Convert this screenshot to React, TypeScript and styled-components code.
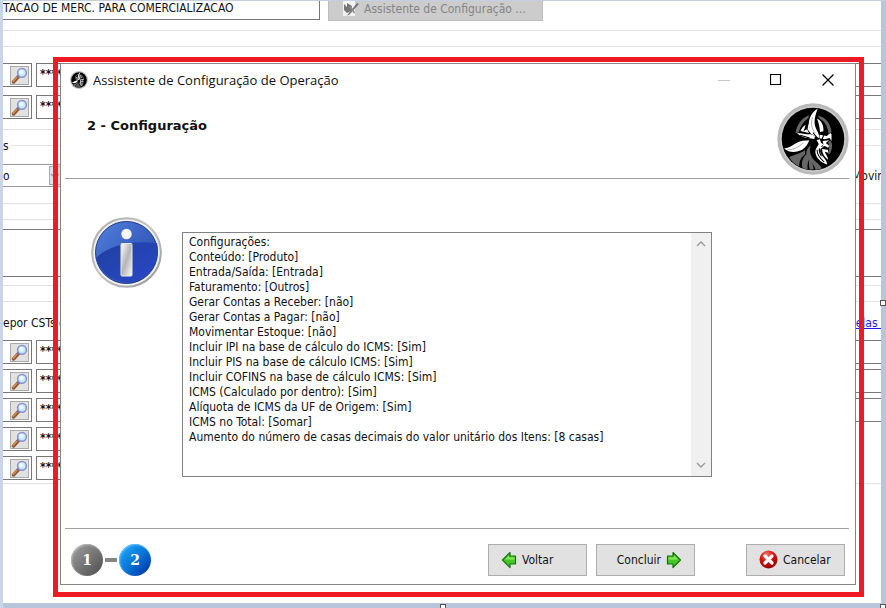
import React from "react";
import styled, { createGlobalStyle } from "styled-components";

const GlobalStyle = createGlobalStyle`
  * { box-sizing: border-box; }
  body { margin: 0; background: #b8c5da; }
  body, button, input, textarea { font-family: "DejaVu Sans Condensed", "DejaVu Sans", sans-serif; font-size: 12px; color: #111; }
  button, input, textarea { margin: 0; padding: 0; border: 0; border-radius: 0; outline: 0; }
  svg { display: block; flex: none; }
`;

const Desktop = styled.div`
  position: relative;
  min-height: 100vh;
  padding: 1px 5px 5px 3px;
  background: #b8c5da;
  overflow: hidden;
  box-shadow: inset 3px 0 #cad5e7, inset 0 1px #c5cfe2;
`;

const Form = styled.main`
  min-height: calc(100vh - 6px);
  background: #fff;
  overflow: hidden;
`;

const TopBar = styled.div`
  display: flex;
  align-items: flex-start;
  gap: 8px;
  height: 30px;
  border-bottom: 1px solid #e2e2e2;
`;

const OperationName = styled.input`
  width: 317px;
  height: 19px;
  padding-bottom: 4px;
  border-right: 1px solid #777;
  border-bottom: 1px solid #777;
  background: #fff;
`;

const AssistantButton = styled.button`
  display: flex;
  align-items: center;
  gap: 5px;
  width: 215px;
  height: 20px;
  padding: 0 0 4px 13px;
  border: 1px solid #bdbdbd;
  border-top: 0;
  background: #ccc;
  color: #858585;
  white-space: nowrap;
`;

const Group = styled.section<{ $height: number; $gap?: number }>`
  display: flex;
  flex-direction: column;
  gap: ${(p) => p.$gap ?? 5}px;
  height: ${(p) => p.$height}px;
  margin-top: 15px;
  border-top: 1px solid #e2e2e2;
  border-bottom: 1px solid #e2e2e2;
`;

const LookupGroup = styled(Group)`
  padding-top: 16px;
`;

const TaxGroup = styled(Group)`
  padding-top: 12px;
`;

const TaxHeading = styled.div`
  display: flex;
  justify-content: space-between;
  height: 21px;
  line-height: 18px;
  white-space: nowrap;
`;

const Link = styled.a`
  color: #1a1aee;
`;

const Row = styled.div<{ $short?: boolean }>`
  display: flex;
  gap: 4px;
  height: 24px;
  width: ${(p) => (p.$short ? "60%" : "100%")};
`;

const CodeCell = styled.div`
  display: flex;
  align-items: center;
  justify-content: flex-end;
  width: 29px;
  padding-right: 2px;
  border: 1px solid #777;
  border-left: 0;
`;

const SearchButton = styled.button`
  display: grid;
  place-items: center;
  width: 19px;
  height: 19px;
  border: 1px solid #aaa;
  background: #e1e1e1;
`;

const Description = styled.input`
  flex: 1;
  min-width: 0;
  padding: 0 3px 2px;
  border: 1px solid #777;
  border-right: 0;
  background: #fff;
  font-weight: 700;
`;

const Legend = styled.div`
  height: 18px;
  margin-top: -8px;
  line-height: 16px;
`;

const LegendText = styled.span`
  padding-right: 2px;
  background: #fff;
`;

const ComboRow = styled.div`
  display: flex;
  justify-content: space-between;
  align-items: center;
  height: 23px;
`;

const Combo = styled.div`
  display: flex;
  align-items: center;
  justify-content: space-between;
  width: 64px;
  height: 23px;
  border: 1px solid #999;
  border-left: 0;
`;

const ComboButton = styled.button`
  width: 17px;
  height: 19px;
  border: 1px solid #aaa;
  background: #e1e1e1;
`;

const OptionLabel = styled.span`
  width: 29px;
  overflow: hidden;
  white-space: nowrap;
`;

const NotesGroup = styled(Group)`
  padding-top: 9px;
`;

const Notes = styled.textarea`
  width: 100%;
  height: 48px;
  border-top: 1px solid #777;
  border-bottom: 1px solid #777;
  resize: none;
`;

const Handle = styled.span<{ $side: "right" | "bottom" | "corner" }>`
  position: absolute;
  width: 6px;
  height: 6px;
  border: 1px solid #555;
  background: #fff;
  ${(p) => p.$side === "right" && "right: 0; top: calc(50% - 4px);"}
  ${(p) => p.$side === "bottom" && "bottom: -2px; left: calc(50% - 3px);"}
  ${(p) => p.$side === "corner" && "right: 0; bottom: -2px;"}
`;

const Highlight = styled.div`
  position: absolute;
  inset: 57px 22px 11px 53px;
  display: flex;
  padding: 1px 3px 7px 2px;
  border: 5px solid #ed1c24;
`;

const Dialog = styled.section`
  flex: 1;
  display: flex;
  flex-direction: column;
  min-width: 0;
  border: 1px solid #858585;
  background: #fff;
`;

const TitleBar = styled.header`
  display: flex;
  align-items: center;
  gap: 5px;
  height: 32px;
  padding: 0 4px 0 9px;
`;

const Title = styled.h1`
  flex: 1;
  margin: 0;
  font: 400 13px "Open Sans", sans-serif;
`;

const WindowButton = styled.button`
  display: grid;
  place-items: center;
  width: 47px;
  height: 30px;
  background: none;
`;

const Banner = styled.div`
  display: flex;
  justify-content: space-between;
  height: 83px;
  margin: 0 6px 0 4px;
  padding: 7px 0 0 22px;
  border-bottom: 1px solid #a0a0a0;
`;

const Heading = styled.h2`
  margin: 0;
  padding-top: 14px;
  font: 700 13px/18px "DejaVu Sans", sans-serif;
`;

const Body = styled.div`
  flex: 1;
  display: flex;
  gap: 20px;
  padding: 38px 143px 51px 30px;
`;

const Memo = styled.div`
  flex: 1;
  display: flex;
  margin-top: 15px;
  border: 1px solid #828282;
`;

const MemoText = styled.textarea`
  flex: 1;
  min-width: 0;
  padding: 2px 0 0 6px;
  line-height: 15px;
  resize: none;
  overflow: hidden;
  white-space: pre;
  background: #fff;
`;

const ScrollTrack = styled.div`
  display: flex;
  flex-direction: column;
  justify-content: space-between;
  width: 20px;
  background: #f0f0f0;
`;

const ScrollButton = styled.button`
  display: grid;
  place-items: center;
  height: 22px;
  background: none;
`;

const Footer = styled.footer`
  display: flex;
  align-items: center;
  height: 56px;
  margin: 0 6px 0 4px;
  padding: 6px 4px 0 6px;
  border-top: 1px solid #a0a0a0;
`;

const Steps = styled.div`
  flex: 1;
  display: flex;
  align-items: center;
  gap: 2px;
`;

const Step = styled.span<{ $active?: boolean }>`
  display: grid;
  place-items: center;
  width: 32px;
  height: 32px;
  border-radius: 50%;
  color: #fff;
  font: 700 14px "DejaVu Serif", serif;
  background: ${(p) =>
    p.$active
      ? "linear-gradient(135deg, #1d9df5 15%, #0877d8 50%, #0238a8 90%)"
      : "linear-gradient(135deg, #949494 15%, #777 50%, #555 90%)"};
  box-shadow: inset 1px 1px 2px ${(p) => (p.$active ? "#6cc4ff" : "#bbb")};
`;

const StepLink = styled.span`
  width: 12px;
  height: 4px;
  background: #858585;
`;

const Buttons = styled.div`
  display: flex;
  gap: 9px;
`;

const ActionButton = styled.button<{ $apart?: boolean; $end?: boolean }>`
  display: flex;
  align-items: center;
  justify-content: ${(p) => (p.$end ? "flex-end" : "flex-start")};
  gap: 5px;
  width: 99px;
  height: 32px;
  margin-left: ${(p) => (p.$apart ? 42 : 0)}px;
  padding: 0 12px;
  border: 1px solid #adadad;
  background: #e1e1e1;
`;

const Magnifier = () => (
  <svg width="17" height="17" viewBox="0 0 17 17">
    <path d="M2.5 15 7.5 9.5" stroke="#8b5a3c" strokeWidth="3.4" strokeLinecap="round" />
    <path d="M2.3 14.2 7 9" stroke="#e08a3c" strokeWidth="1.6" strokeLinecap="round" />
    <path d="M6.5 10.5 8.5 8.3" stroke="#6a6a9c" strokeWidth="3" />
    <circle cx="11" cy="5.8" r="4.4" fill="#c4ebff" stroke="#8a8fd0" strokeWidth="1.5" />
    <circle cx="10.3" cy="5" r="2.2" fill="#effaff" />
  </svg>
);

const WizardIcon = () => (
  <svg width="17" height="16" viewBox="0 0 17 16">
    <path d="M1 0h12v15H1z" fill="#f2f2f2" />
    <path d="M2 3l3 3V2l5 3-1 5-4 2-3-3z" fill="#777" />
    <path d="M6 13 15 2l2 1-9 10-3 2z" fill="#777" />
    <path d="M8 5.500 12.500 12" stroke="#8b8b8b" strokeWidth="1.5" />
  </svg>
);

const InfoIcon = () => (
  <svg width="71" height="71" viewBox="0 0 71 71" role="img" aria-label="Informação">
    <defs>
      <linearGradient id="infoRim" x2="1" y2="1">
        <stop stopColor="#a8a8a8" />
        <stop offset=".5" stopColor="#c4c4c4" />
        <stop offset="1" stopColor="#909090" />
      </linearGradient>
      <linearGradient id="infoTop" x2="1" y2="1">
        <stop stopColor="#5180dc" />
        <stop offset="1" stopColor="#2443a8" />
      </linearGradient>
      <linearGradient id="infoLow" x2="1" y2="1">
        <stop stopColor="#2040a0" />
        <stop offset="1" stopColor="#2948c8" />
      </linearGradient>
      <linearGradient id="infoStem" x2="1" y2="1">
        <stop stopColor="#fff" />
        <stop offset=".5" stopColor="#b5b5b5" />
        <stop offset="1" stopColor="#fafafa" />
      </linearGradient>
    </defs>
    <circle cx="35.5" cy="35.5" r="34.3" fill="#f0f0f0" stroke="url(#infoRim)" strokeWidth="2" />
    <circle cx="35.5" cy="35.5" r="31" fill="url(#infoTop)" stroke="#203c8c" />
    <path d="M5 41C18 28 40 23 66 26a31 31 0 1 1-61 15z" fill="url(#infoLow)" />
    <circle cx="35.5" cy="17" r="5.2" fill="#f8f8f8" />
    <rect x="30" y="26.5" width="11" height="32.5" rx="1" fill="url(#infoStem)" stroke="#e8e8e8" />
  </svg>
);

const VikingLogo = ({ size }: { size: number }) => (
  <svg width={size} height={size} viewBox="233 308 214 214" aria-hidden="true">
    <circle cx="340" cy="415" r="106" fill="#b8b8b8" />
    <circle cx="340" cy="415" r="98" fill="#c9c9c9" />
    <circle cx="340" cy="415" r="93" fill="#000" />
    <g fill="#666">
      <path d="M328 344c-22 10-37 30-40 54l10-3c4-18 13-32 28-42z" />
      <path d="M355 346c24 4 38 25 40 49l-9 4c-2-20-10-36-26-44z" />
      <path d="M316 448c-12 10-27 12-47 21 8 13 18 21 30 27 0-18 6-27 18-36z" />
      <path d="M320 461c-10 8-15 22-12 38 4 4 10 6 16 6-2-15 2-25 8-38z" />
      <path d="M334 434c-9 18 2 37 14 48 10 8 15 14 18 21l-18 4c-4-18-20-25-27-44-3-12 3-23 13-29z" />
      <path d="M330 474c-4 10-2 22 0 32h12c-1-12-5-22-12-32z" />
      <path d="M391 419c8 10 7 25 0 38l-6 4c4-15 4-28 0-37z" />
    </g>
    <g fill="#fff">
      <path d="M354 324c-23 15-32 40-23 64 5 12 14 20 26 24 4-6-3-17-8-28-9-21-2-40 5-60z" />
      <path d="M352 354c14 7 20 21 19 38l-10 2c-1-14-4-27-9-40z" />
      <path d="M292 397c13 0 25 4 40 4l14 4-2 10-20-3c-11-1-22-6-32-15z" />
      <path d="M318 373c-7 5-12 11-15 18l25 6-5-10-9 1z" />
      <path d="M326 369l-2 17 11 15 10 2c-11-9-16-20-19-34z" />
      <path d="M360 402l21 4 10-9 4 4v20l-6-9-14 4-16-3z" />
      <path d="M254 443c22-1 31-19 55-23l20-1c-3 9-9 20-20 27-18 10-39 11-55-3z" />
      <path d="M351 418l9-2 4 10 8 5-9 6 8 2c-15 5-11 18-1 29 7 8 12 15 12 23-19-6-34-20-35-37 0-11 8-17 10-24z" />
      <path d="M369 421l19-2-10 8 10 8-3 6-10-5-8 3 4-8z" />
      <path d="M367 445l17 2 2 9-11-3c3 8 9 14 10 24-10-7-18-19-18-32z" />
    </g>
    <g fill="none" stroke="#000" strokeWidth="3">
      <path d="M263 447c18 1 32-7 48-20M339 350c-7 20-2 36 8 48" stroke="#888" strokeWidth="2" />
      <path d="M352 447c0 15 9 26 21 36M359 443c-2 10 2 17 6 23M340 396l16 20M373 401l-7 17" />
      <path d="M323 378l-10 12M302 404l28 8" />
    </g>
  </svg>
);

const Arrow = ({ right }: { right?: boolean }) => (
  <svg width="16" height="18" viewBox="0 0 16 18">
    <path
      d={right ? "M1.500 5H7V1.500L14.500 9 7 16.500V13H1.500z" : "M14.500 5H9V1.500L1.500 9 9 16.500V13h5.500z"}
      fill="#45c626"
      stroke="#17720b"
      strokeWidth="1.2"
      strokeLinejoin="round"
    />
    <path
      d={right ? "M2.500 6.500H8V4.500L12 8.500H2.500z" : "M13.500 6.500H8V4.500L4 8.500h9.500z"}
      fill="#86e860"
    />
  </svg>
);

const CancelIcon = () => (
  <svg width="19" height="19" viewBox="0 0 19 19">
    <defs>
      <radialGradient id="cancelRed" cx=".4" cy=".25" r=".8">
        <stop stopColor="#f47a70" />
        <stop offset=".45" stopColor="#d81313" />
        <stop offset="1" stopColor="#8c0000" />
      </radialGradient>
    </defs>
    <circle cx="9.5" cy="9.5" r="9" fill="url(#cancelRed)" />
    <path d="m6 6 7 7m0-7-7 7" stroke="#fff" strokeWidth="3.2" strokeLinecap="round" />
  </svg>
);

const Chevron = ({ down }: { down?: boolean }) => (
  <svg width="10" height="6" viewBox="0 0 10 6">
    <path d={down ? "m1 1 4 4 4-4" : "m1 5 4-4 4 4"} fill="none" stroke="#9a9a9a" strokeWidth="1.4" />
  </svg>
);

const summary = [
  "Configurações:",
  "Conteúdo: [Produto]",
  "Entrada/Saída: [Entrada]",
  "Faturamento: [Outros]",
  "Gerar Contas a Receber: [não]",
  "Gerar Contas a Pagar: [não]",
  "Movimentar Estoque: [não]",
  "Incluir IPI na base de cálculo do ICMS: [Sim]",
  "Incluir PIS na base de cálculo ICMS: [Sim]",
  "Incluir COFINS na base de cálculo ICMS: [Sim]",
  "ICMS (Calculado por dentro): [Sim]",
  "Alíquota de ICMS da UF de Origem: [Sim]",
  "ICMS no Total: [Somar]",
  "Aumento do número de casas decimais do valor unitário dos Itens: [8 casas]",
].join("\n");

const LookupRow = ({ short }: { short?: boolean }) => (
  <Row $short={short}>
    <CodeCell>
      <SearchButton aria-label="Pesquisar">
        <Magnifier />
      </SearchButton>
    </CodeCell>
    <Description aria-label="Descrição" defaultValue="****" />
  </Row>
);

export default function App() {
  return (
    <Desktop>
      <GlobalStyle />
      <Form>
        <TopBar>
          <OperationName aria-label="Operação" defaultValue="TACAO DE MERC. PARA COMERCIALIZACAO" />
          <AssistantButton disabled>
            <WizardIcon />
            Assistente de Configuração ...
          </AssistantButton>
        </TopBar>
        <LookupGroup $height={84} $gap={8}>
          <LookupRow />
          <LookupRow />
        </LookupGroup>
        <Group $height={59} $gap={8}>
          <Legend>
            <LegendText>s</LegendText>
          </Legend>
          <ComboRow>
            <Combo>
              <span>o</span>
              <ComboButton aria-label="Abrir lista">
                <Chevron down />
              </ComboButton>
            </Combo>
            <OptionLabel>Movim</OptionLabel>
          </ComboRow>
        </Group>
        <NotesGroup $height={67}>
          <Notes aria-label="Observações" />
        </NotesGroup>
        <TaxGroup $height={183}>
          <TaxHeading>
            <span>epor CSTs de</span>
            <Link href="#regras">elas&nbsp;</Link>
          </TaxHeading>
          <LookupRow />
          <LookupRow />
          <LookupRow />
          <LookupRow short />
          <LookupRow short />
        </TaxGroup>
      </Form>
      <Handle $side="right" />
      <Handle $side="bottom" />
      <Handle $side="corner" />
      <Highlight>
        <Dialog role="dialog" aria-labelledby="dialog-title">
          <TitleBar>
            <VikingLogo size={18} />
            <Title id="dialog-title">Assistente de Configuração de Operação</Title>
            <WindowButton disabled aria-label="Minimizar">
              <svg width="12" height="12">
                <path d="M0 6.500h12" stroke="#c4c4c4" />
              </svg>
            </WindowButton>
            <WindowButton aria-label="Maximizar">
              <svg width="12" height="12">
                <path d="M.5.500h10v10H.5z" fill="none" stroke="#000" strokeWidth="1.2" />
              </svg>
            </WindowButton>
            <WindowButton aria-label="Fechar">
              <svg width="12" height="12">
                <path d="m.5.500 11 11m0-11-11 11" stroke="#000" strokeWidth="1.2" />
              </svg>
            </WindowButton>
          </TitleBar>
          <Banner>
            <Heading>2 - Configuração</Heading>
            <VikingLogo size={72} />
          </Banner>
          <Body>
            <InfoIcon />
            <Memo>
              <MemoText aria-label="Configurações" readOnly value={summary} />
              <ScrollTrack>
                <ScrollButton aria-label="Rolar para cima">
                  <Chevron />
                </ScrollButton>
                <ScrollButton aria-label="Rolar para baixo">
                  <Chevron down />
                </ScrollButton>
              </ScrollTrack>
            </Memo>
          </Body>
          <Footer>
            <Steps>
              <Step>1</Step>
              <StepLink />
              <Step $active>2</Step>
            </Steps>
            <Buttons>
              <ActionButton>
                <Arrow />
                Voltar
              </ActionButton>
              <ActionButton $end>
                Concluir
                <Arrow right />
              </ActionButton>
              <ActionButton $apart>
                <CancelIcon />
                Cancelar
              </ActionButton>
            </Buttons>
          </Footer>
        </Dialog>
      </Highlight>
    </Desktop>
  );
}
